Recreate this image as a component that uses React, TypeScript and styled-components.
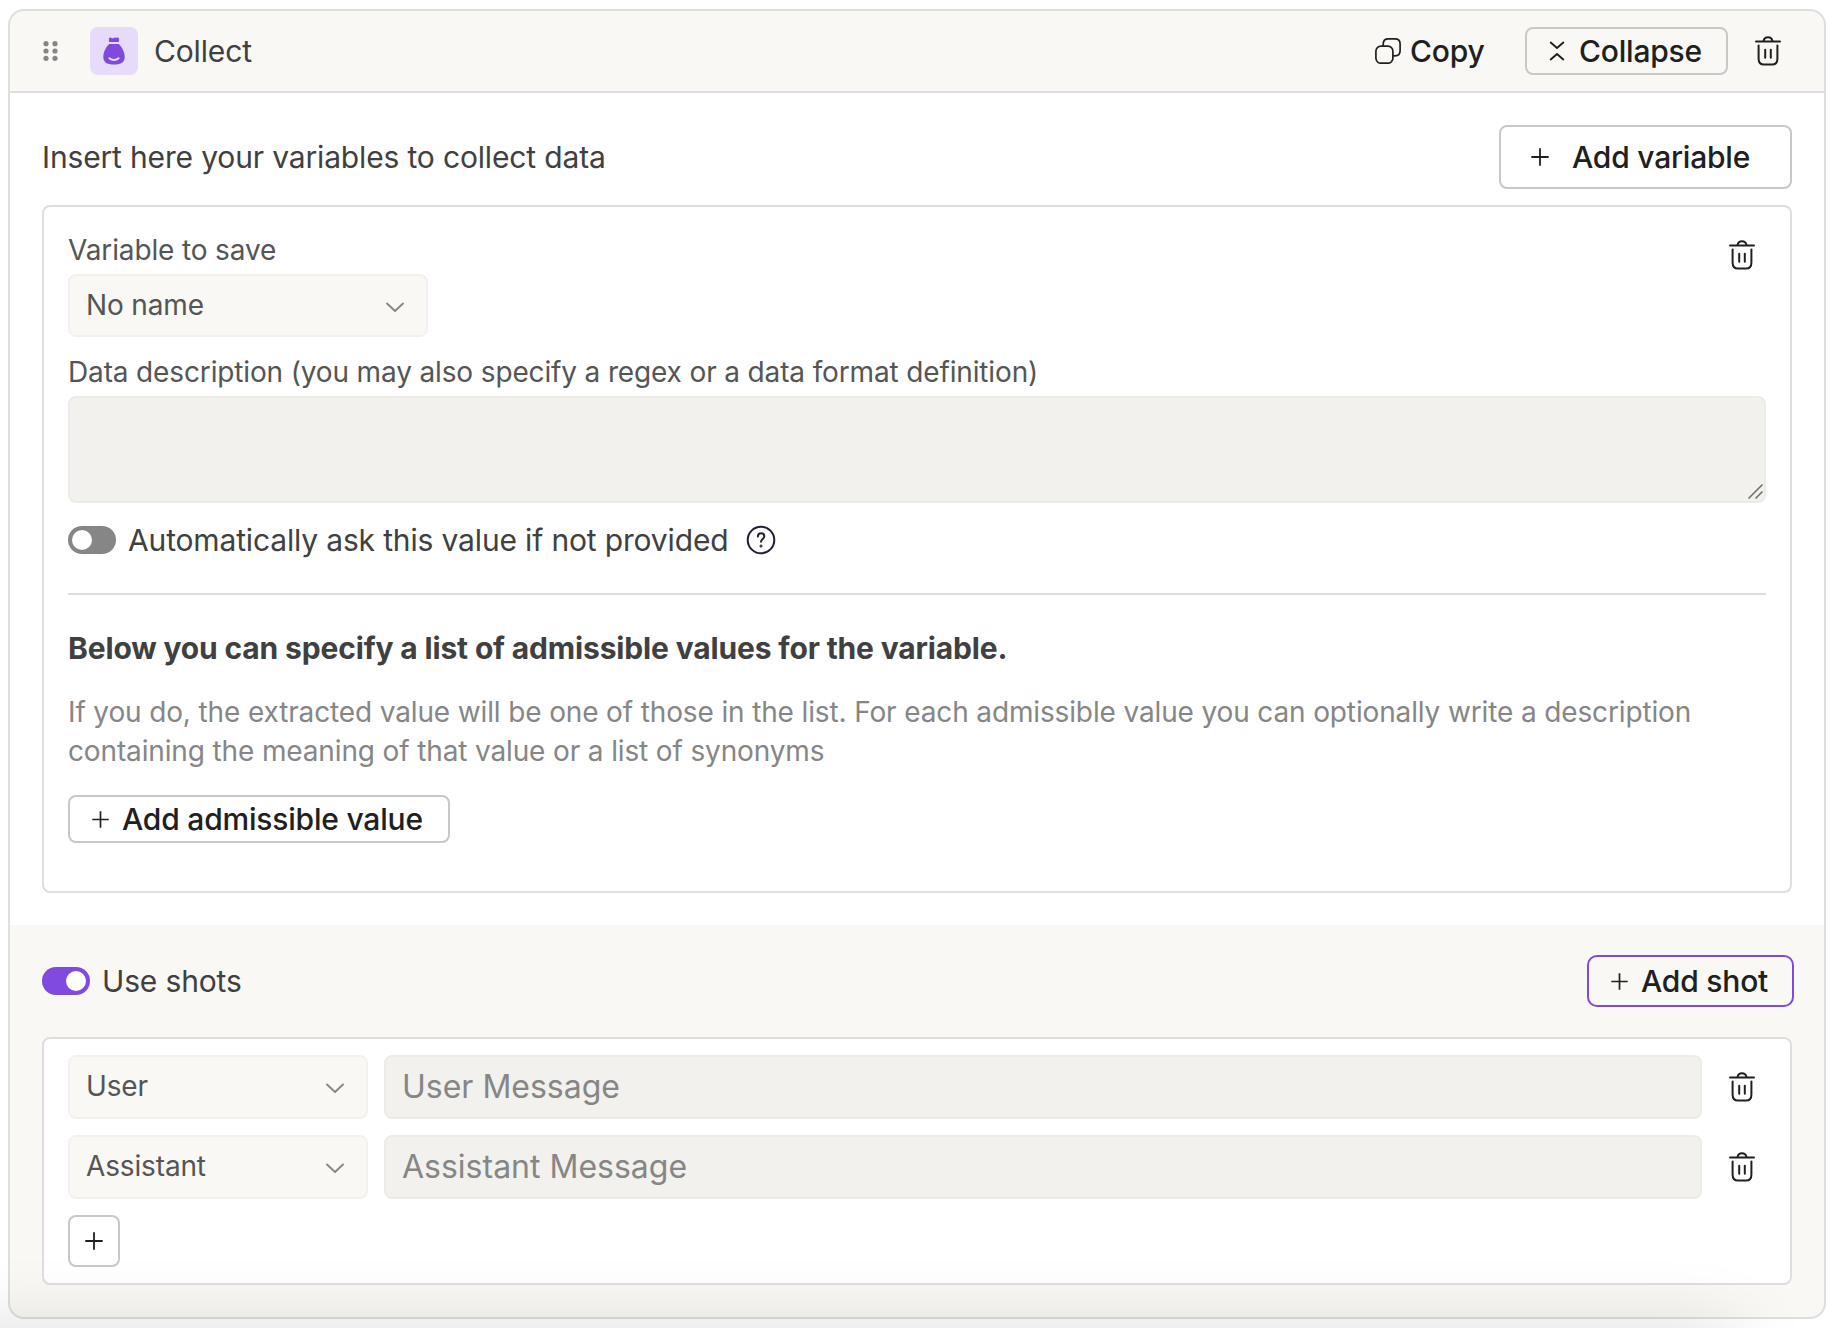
import React from "react";
import styled, { createGlobalStyle } from "styled-components";

const GlobalStyle = createGlobalStyle`
  *, *::before, *::after { box-sizing: border-box; }
  body {
    margin: 0;
    background: #fff;
    font-family: Inter, "Liberation Sans", sans-serif;
    -webkit-font-smoothing: antialiased;
  }
  button, input, textarea { font-family: inherit; }
`;

const Page = styled.main`
  position: relative;
  height: 1328px;
  padding: 9px 8px;
  overflow: hidden;
`;

const Card = styled.section`
  width: 1818px;
  height: 1310px;
  display: flex;
  flex-direction: column;
  border: 2px solid #dededf;
  border-radius: 16px;
  overflow: hidden;
  background: #f9f8f4;
`;

const Header = styled.header`
  flex: none;
  height: 82px;
  display: flex;
  align-items: center;
  padding: 0 43px 0 33px;
  border-bottom: 2px solid #dededf;
`;

const HeaderActions = styled.div`
  display: flex;
  align-items: center;
  margin-left: auto;
`;

const IconTile = styled.div`
  width: 48px;
  height: 48px;
  display: flex;
  align-items: center;
  justify-content: center;
  margin: 0 16px 0 31px;
  border-radius: 8px;
  background: #e6dbf8;
`;

const Text = styled.span`
  font-size: 30px;
  line-height: 36px;
  white-space: nowrap;
  color: #404040;
  letter-spacing: -0.155px;
`;

const Button = styled.button<{
  $height: number;
  $width?: number;
  $gap: number;
  $pad: number;
  $border?: string;
  $radius?: number;
}>`
  flex: none;
  height: ${(p) => p.$height}px;
  width: ${(p) => (p.$width ? `${p.$width}px` : "auto")};
  display: flex;
  align-items: center;
  gap: ${(p) => p.$gap}px;
  padding: 0 0 0 ${(p) => p.$pad}px;
  border: 2px solid ${(p) => p.$border ?? "#c8c8c9"};
  border-radius: ${(p) => p.$radius ?? 8}px;
  background: transparent;
  color: #202020;
  font-size: 30px;
  font-weight: 550;
  line-height: 36px;
  letter-spacing: -0.2px;
  white-space: nowrap;
`;

const IconButton = styled.button`
  flex: none;
  display: flex;
  padding: 0;
  border: 0;
  background: none;
  color: #202020;
`;

const HeaderTrash = styled(IconButton)`
  margin-left: 27px;
`;

const Body = styled.div`
  flex: none;
  height: 832px;
  padding: 32px;
  background: #fff;
`;

const Row = styled.div<{ $height: number }>`
  display: flex;
  align-items: center;
  justify-content: space-between;
  height: ${(p) => p.$height}px;
`;

const Panel = styled.div<{ $height: number; $top: number }>`
  width: 1750px;
  height: ${(p) => p.$height}px;
  margin-top: 16px;
  padding: ${(p) => p.$top}px 24px 0;
  border: 2px solid #dededf;
  border-radius: 8px;
  background: #fff;
`;

const PanelTop = styled.div`
  display: flex;
  justify-content: space-between;
  align-items: flex-start;
  padding-right: 11px;
`;

const TrashSlot = styled.div`
  padding-top: 7px;
`;

const Label = styled.label`
  display: block;
  margin-bottom: 7px;
  font-size: 28px;
  line-height: 34px;
  letter-spacing: -0.142px;
  color: #555;
  white-space: nowrap;
`;

const Select = styled.div<{ $width: number; $height: number }>`
  flex: none;
  width: ${(p) => p.$width}px;
  height: ${(p) => p.$height}px;
  display: flex;
  align-items: center;
  justify-content: space-between;
  padding: 0 21px 2px 16px;
  border: 2px solid #f2f1ed;
  border-radius: 8px;
  background: #f9f8f4;
  color: #555;
  font-size: 28px;
  line-height: 34px;
  letter-spacing: -0.142px;
  svg { margin-top: 4px; }
`;

const Area = styled.div`
  display: flex;
  align-items: flex-end;
  justify-content: flex-end;
  height: 107px;
  padding: 1px 0;
  border: 2px solid #ecebe6;
  border-radius: 8px;
  background: #f2f1ed;
`;

const Field = styled.div`
  margin-top: 18px;
`;

const ToggleRow = styled.div`
  display: flex;
  align-items: center;
  height: 28px;
  gap: 12px;
`;

const AskRow = styled(ToggleRow)`
  margin-top: 23px;
  svg { margin-left: 6px; }
`;

const Switch = styled.div<{ $on?: boolean }>`
  flex: none;
  width: 48px;
  height: 28px;
  display: flex;
  align-items: center;
  justify-content: ${(p) => (p.$on ? "flex-end" : "flex-start")};
  padding: 4px;
  border-radius: 14px;
  background: ${(p) => (p.$on ? "#8049e0" : "#868686")};
  &::before {
    content: "";
    width: 20px;
    height: 20px;
    border-radius: 50%;
    background: #fff;
  }
`;

const Divider = styled.hr`
  height: 2px;
  margin: 39px 0 35px;
  border: 0;
  background: #dededf;
`;

const Heading = styled.h3`
  margin: 0 0 27px;
  font-size: 30px;
  font-weight: 700;
  line-height: 36px;
  letter-spacing: -0.157px;
  color: #404040;
  white-space: nowrap;
`;

const Hint = styled.p`
  margin: 0 0 24px;
  font-size: 28px;
  line-height: 39px;
  letter-spacing: -0.137px;
  color: #868686;
  white-space: nowrap;
`;

const Shots = styled.div`
  flex: 1;
  padding: 30px 30px 0 32px;
`;

const ShotsPanel = styled(Panel)`
  margin-top: 30px;
  display: flex;
  flex-direction: column;
  gap: 16px;
`;

const Shot = styled.div`
  display: flex;
  align-items: center;
  gap: 16px;
`;

const Message = styled.div`
  width: 1318px;
  height: 64px;
  display: flex;
  align-items: center;
  margin-right: 11px;
  padding: 0 16px;
  border: 2px solid #ecebe6;
  border-radius: 8px;
  background: #f2f1ed;
  color: #868686;
  font-size: 32px;
  line-height: 38px;
`;

/* Shadow cast by the bar that sits just below the visible area. */
const BottomShade = styled.div`
  position: absolute;
  left: -60px;
  right: 100px;
  top: 1338px;
  height: 60px;
  box-shadow: 0 0 80px rgba(0, 0, 0, 0.18);
  pointer-events: none;
`;

const Trash = () => (
  <svg width="26" height="30" viewBox="0 0 26 30" fill="none" stroke="currentColor" strokeWidth="2" strokeLinecap="round">
    <path d="M1 5.5h24" />
    <path d="M8.6 5C9 2.600 10.600 1.300 13 1.300S17 2.600 17.400 5" />
    <path d="M3.600 9.500v13.200c0 3.700 2 5.800 5.400 5.800h8c3.400 0 5.400-2.100 5.400-5.800V9.500" />
    <path d="M10.200 13.800v8M15.800 13.800v8" />
  </svg>
);

const Plus = ({ size = 18 }: { size?: number }) => (
  <svg width={size} height={size} viewBox="0 0 18 18" fill="none" stroke="currentColor" strokeWidth="1.800">
    <path d="M9 0.300v17.400M0.300 9h17.400" />
  </svg>
);

const Chevron = () => (
  <svg width="20" height="12" viewBox="0 0 20 12" fill="none" stroke="#868686" strokeWidth="1.900" strokeLinecap="round" strokeLinejoin="round">
    <path d="M2 2.500l8 7.500 8-7.500" />
  </svg>
);

const Grip = () => (
  <svg width="16" height="20" viewBox="0 0 16 20" fill="#868686">
    {[2.7, 10, 17.3].map((y) => (
      <React.Fragment key={y}>
        <circle cx="3" cy={y} r="2.600" />
        <circle cx="12" cy={y} r="2.600" />
      </React.Fragment>
    ))}
  </svg>
);

const Bag = () => (
  <svg width="24" height="28" viewBox="0 0 24 28">
    <path
      fill="#8049e0"
      d="M7 1.600C7.300 0.500 8.400 0.400 9.300 0.900c1 .6 1.700.5 2.700 0 1-.5 1.800-.5 2.700 0 .9-.5 2-.4 2.300.7.300 1 .2 2-.3 3.400H7.300C6.800 3.600 6.700 2.600 7 1.600zM7.200 7h9.600c3.400 3.400 5.900 8.300 5.900 13 0 5-3.300 7.500-10.700 7.500S1.300 25 1.300 20c0-4.700 2.500-9.600 5.900-13z"
    />
    <path d="M7.400 21.300c2.400 2.300 6.800 2.300 9.200 0" fill="none" stroke="#e6dbf8" strokeWidth="2" strokeLinecap="round" />
  </svg>
);

const CopyIcon = () => (
  <svg width="26" height="26" viewBox="0 0 26 26" fill="none" stroke="currentColor" strokeWidth="1.700">
    <rect x="0.900" y="8.200" width="17" height="17" rx="5" />
    <path d="M8.200 8.200V6c0-3.300 1.800-5.100 5.100-5.100H20c3.300 0 5.100 1.800 5.100 5.100v6.700c0 3.300-1.800 5.100-5.100 5.100h-2.100" />
  </svg>
);

const CollapseIcon = () => (
  <svg width="16" height="20" viewBox="0 0 16 20" fill="none" stroke="currentColor" strokeWidth="1.900" strokeLinecap="round" strokeLinejoin="round">
    <path d="M1.700 1.500L8 7l6.300-5.500M1.700 18.500L8 13l6.300 5.500" />
  </svg>
);

const Help = () => (
  <svg width="30" height="30" viewBox="0 0 30 30" fill="none" stroke="#221f33" strokeWidth="2" strokeLinecap="round">
    <circle cx="15" cy="15" r="13.300" />
    <path d="M11.900 11.600c0-2 1.300-3.300 3.200-3.300s3.200 1.200 3.200 3c0 2.700-3.300 2.800-3.300 5.500" />
    <circle cx="15" cy="21" r="0.500" fill="#221f33" />
  </svg>
);

const ResizeHandle = () => (
  <svg width="16" height="16" viewBox="0 0 16 16" stroke="#6b6b6b" strokeWidth="1.500">
    <path d="M0.500 14.500l14-14M7.500 14.500l7-7" />
  </svg>
);

const shots = [
  { role: "User", message: "User Message" },
  { role: "Assistant", message: "Assistant Message" },
];

export default function App() {
  return (
    <Page>
      <GlobalStyle />
      <Card>
        <Header>
          <Grip />
          <IconTile>
            <Bag />
          </IconTile>
          <Text>Collect</Text>
          <HeaderActions>
            <Button $height={48} $gap={9} $pad={0} $width={152} $border="transparent">
              <CopyIcon />
              Copy
            </Button>
            <Button $height={48} $gap={14} $pad={22} $width={203}>
              <CollapseIcon />
              Collapse
            </Button>
            <HeaderTrash aria-label="Delete block">
              <Trash />
            </HeaderTrash>
          </HeaderActions>
        </Header>
        <Body>
          <Row $height={64}>
            <Text>Insert here your variables to collect data</Text>
            <Button $height={64} $gap={23} $pad={30} $width={293}>
              <Plus />
              Add variable
            </Button>
          </Row>
          <Panel $height={688} $top={26}>
            <PanelTop>
              <div>
                <Label>Variable to save</Label>
                <Select $width={360} $height={63}>
                  No name
                  <Chevron />
                </Select>
              </div>
              <TrashSlot>
                <IconButton aria-label="Delete variable">
                  <Trash />
                </IconButton>
              </TrashSlot>
            </PanelTop>
            <Field>
              <Label>Data description (you may also specify a regex or a data format definition)</Label>
              <Area>
                <ResizeHandle />
              </Area>
            </Field>
            <AskRow>
              <Switch />
              <Text>Automatically ask this value if not provided</Text>
              <Help />
            </AskRow>
            <Divider />
            <Heading>Below you can specify a list of admissible values for the variable.</Heading>
            <Hint>
              If you do, the extracted value will be one of those in the list. For each admissible value you can optionally write a description
              <br />
              containing the meaning of that value or a list of synonyms
            </Hint>
            <Button $height={48} $gap={13} $pad={22} $width={382}>
              <Plus size={17} />
              Add admissible value
            </Button>
          </Panel>
        </Body>
        <Shots>
          <Row $height={52}>
            <ToggleRow>
              <Switch $on />
              <Text>Use shots</Text>
            </ToggleRow>
            <Button $height={52} $gap={13} $pad={22} $width={207} $border="#8049e0" $radius={10}>
              <Plus size={17} />
              Add shot
            </Button>
          </Row>
          <ShotsPanel $height={248} $top={16}>
            {shots.map((s) => (
              <Shot key={s.role}>
                <Select $width={300} $height={64}>
                  {s.role}
                  <Chevron />
                </Select>
                <Message>{s.message}</Message>
                <IconButton aria-label="Delete message">
                  <Trash />
                </IconButton>
              </Shot>
            ))}
            <Button $height={52} $gap={0} $pad={15} $width={52} aria-label="Add message">
              <Plus />
            </Button>
          </ShotsPanel>
        </Shots>
      </Card>
      <BottomShade />
    </Page>
  );
}
